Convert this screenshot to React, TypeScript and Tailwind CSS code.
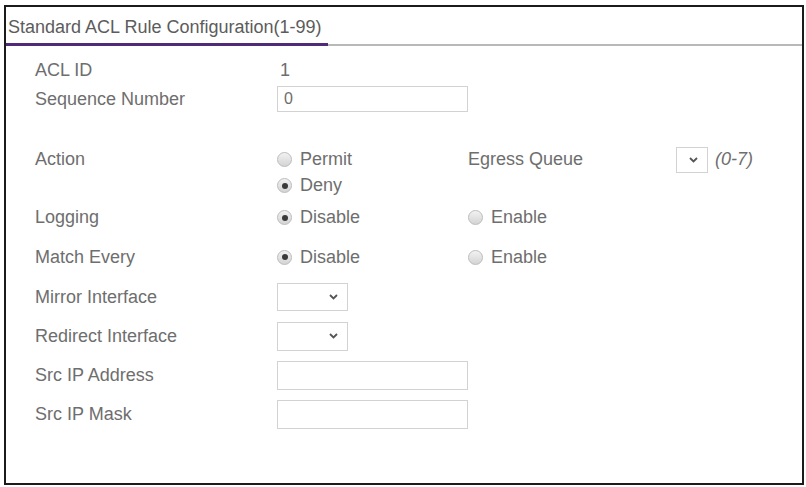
import type { ReactNode } from "react";

const font = { fontFamily: '"Liberation Sans", Arial, sans-serif' };

function Radio({ checked, label }: { checked?: boolean; label: string }) {
  return (
    <label className="flex items-center gap-[8px]">
      <span className="flex h-[15px] w-[15px] items-center justify-center rounded-full border border-[#bcbcbc] bg-gradient-to-b from-[#f2f2f2] to-[#d4d4d4]">
        {checked && <span className="h-[6px] w-[6px] rounded-full bg-[#3a3a3a]" />}
      </span>
      <span>{label}</span>
    </label>
  );
}

function Chevron() {
  return (
    <svg width="9" height="6" viewBox="0 0 9 6" className="text-[#555]">
      <path d="M1 1l3.5 3.5L8 1" fill="none" stroke="currentColor" strokeWidth="1.8" />
    </svg>
  );
}

function Select({ w, h }: { w: string; h: string }) {
  return (
    <div className={`flex items-center justify-end border border-[#d2d2d2] bg-white pr-[9px] ${w} ${h}`}>
      <Chevron />
    </div>
  );
}

function TextBox({ value }: { value?: string }) {
  return (
    <div className="flex h-[29px] w-[191px] items-center border border-[#d2d2d2] bg-white pl-[6px] text-[16px]">
      {value}
    </div>
  );
}

function Row({ label, h, children }: { label?: string; h: string; children?: ReactNode }) {
  return (
    <div className={`flex items-center ${h}`}>
      <div className="w-[242px] shrink-0">{label}</div>
      {children}
    </div>
  );
}

export default function App() {
  return (
    <div className="h-[487px] w-[806px] bg-white pl-[4px] pt-[5px]" style={font}>
      <div className="h-[480px] w-[800px] border-2 border-[#1b1b1b] text-[18px] text-[#6e6e6e]">
        {/* tab-style heading with purple underline */}
        <div className="flex items-end pt-[9px]">
          <div className="border-b-[3px] border-[#4e2a78] pb-[5px] pl-[2px] pr-[6px] leading-[22px] text-[#5c5c5c]">
            Standard ACL Rule Configuration(1-99)
          </div>
          <div className="flex-1 border-b-2 border-[#b9b9b9]" />
        </div>

        <div className="pl-[29px] pt-[10px]">
          <Row label="ACL ID" h="h-[28px]">
            <span className="pl-[3px]">1</span>
          </Row>
          <Row label="Sequence Number" h="h-[30px]">
            <div className="flex h-[26px] w-[191px] items-center border border-[#d2d2d2] bg-white pl-[6px] text-[16px]">
              0
            </div>
          </Row>

          <div className="mt-[32px] flex">
            <div className="w-[242px] shrink-0 leading-[27px]">Action</div>
            <div className="w-[191px] shrink-0">
              <div className="flex h-[27px] items-center">
                <Radio label="Permit" />
              </div>
              <div className="flex h-[25px] items-center">
                <Radio checked label="Deny" />
              </div>
            </div>
            <div className="flex h-[27px] items-center">
              <span className="w-[208px]">Egress Queue</span>
              <Select w="w-[32px]" h="h-[26px]" />
              <span className="ml-[7px] italic">(0-7)</span>
            </div>
          </div>

          <Row label="Logging" h="h-[39px]">
            <div className="w-[191px]">
              <Radio checked label="Disable" />
            </div>
            <Radio label="Enable" />
          </Row>
          <Row label="Match Every" h="h-[40px]">
            <div className="w-[191px]">
              <Radio checked label="Disable" />
            </div>
            <Radio label="Enable" />
          </Row>
          <Row label="Mirror Interface" h="h-[40px]">
            <Select w="w-[71px]" h="h-[28px]" />
          </Row>
          <Row label="Redirect Interface" h="h-[38px]">
            <Select w="w-[71px]" h="h-[29px]" />
          </Row>
          <Row label="Src IP Address" h="h-[40px]">
            <TextBox />
          </Row>
          <Row label="Src IP Mask" h="h-[38px]">
            <TextBox />
          </Row>
        </div>
      </div>
    </div>
  );
}
